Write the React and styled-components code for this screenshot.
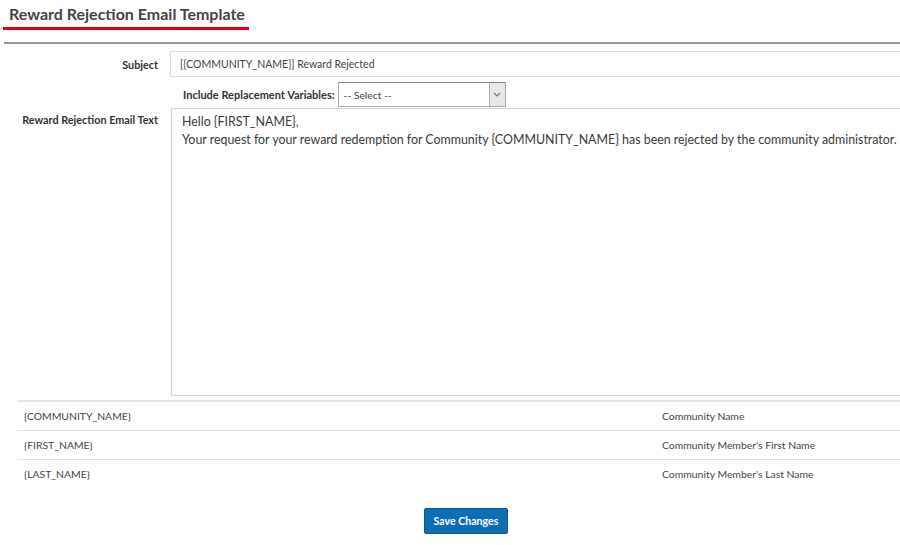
import React from 'react';
import styled, { createGlobalStyle } from 'styled-components';

const GlobalStyle = createGlobalStyle`
  html, body {
    margin: 0;
    padding: 0;
    background: #fff;
    font-family: 'Lato', 'Liberation Sans', sans-serif;
    color: #333;
    overflow: hidden;
  }
`

const Page = styled.div`
  width: 900px;
  height: 545px;
  overflow: hidden;
`

const Header = styled.div`
  padding: 4px 0 0 3px;
`

const Title = styled.h1`
  display: inline-block;
  margin: 0;
  padding: 0 4px 3px 6px;
  font-size: 16px;
  font-weight: 700;
  color: #444;
  border-bottom: 3px solid #e8000b;
  line-height: 20px;
`

const Divider = styled.div`
  margin: 12px 0 0 4px;
  height: 2px;
  background: #999;
`

const Form = styled.div`
  padding: 7px 0 0 0;
`

const Row = styled.div`
  display: grid;
  grid-template-columns: 158px 1fr;
  column-gap: 12px;
  align-items: ${p => p.$top ? 'start' : 'center'};
`

const Label = styled.label`
  text-align: right;
  font-size: 10.8px;
  font-weight: 700;
  color: #333;
  padding-top: ${p => p.$pt || 0}px;
`

const TextInput = styled.div`
  height: 24px;
  border: 1px solid #dcdcdc;
  border-right: none;
  display: flex;
  align-items: center;
  padding-left: 9px;
  font-size: 10.5px;
  color: #444;
`

const VarsRow = styled.div`
  display: flex;
  align-items: center;
  padding-left: 183px;
  margin: 5px 0 1px;
`

const VarsLabel = styled.span`
  font-size: 11px;
  font-weight: 700;
  color: #333;
  margin-right: 3px;
`

const Select = styled.div`
  width: 166px;
  height: 23px;
  border: 1px solid #aaa;
  border-top-color: #888;
  display: flex;
  align-items: stretch;
  font-size: 10.3px;
  color: #444;
`

const SelectText = styled.span`
  flex: 1;
  display: flex;
  align-items: center;
  padding-left: 5px;
`

const SelectArrow = styled.span`
  width: 15px;
  border-left: 1px solid #aaa;
  background: #e8e8e8;
  display: flex;
  align-items: center;
  justify-content: center;
`

const TextArea = styled.div`
  height: 282px;
  border: 1px solid #d0d0d0;
  border-right: none;
  padding: 4px 0 0 10px;
  font-size: 12.4px;
  line-height: 18px;
  color: #3a3a3a;
  margin-left: 1px;
  white-space: nowrap;
`

const VarTable = styled.div`
  margin: 4px 0 0 17px;
  border-top: 2px solid #e6e6e6;
`

const VarRow = styled.div`
  display: grid;
  grid-template-columns: 638px 1fr;
  height: 28px;
  align-items: center;
  border-bottom: ${p => p.$last ? 'none' : '1px solid #e0e0e0'};
  font-size: 10.4px;
  color: #444;
  padding-left: 7px;
`

const Footer = styled.div`
  display: flex;
  justify-content: center;
  padding: 20px 0 0 32px;
`

const SaveButton = styled.button`
  height: 26px;
  padding: 0 9px;
  background: #0f6db6;
  border: 1px solid #0a5592;
  border-radius: 2px;
  color: #fff;
  font-family: inherit;
  font-size: 10.6px;
  font-weight: 700;
`

const Chevron = () => (
  <svg width="8" height="5" viewBox="0 0 8 5">
    <path d="M1 1l3 3 3-3" fill="none" stroke="#777" strokeWidth="1.2" />
  </svg>
);

const vars = [
  ['{COMMUNITY_NAME}', 'Community Name'],
  ['{FIRST_NAME}', "Community Member's First Name"],
  ['{LAST_NAME}', "Community Member's Last Name"],
];

const App = () => (
  <Page>
    <GlobalStyle />
    <Header>
      <Title>Reward Rejection Email Template</Title>
    </Header>
    <Divider />
    <Form>
      <Row>
        <Label>Subject</Label>
        <TextInput>[{'{'}COMMUNITY_NAME{'}'}] Reward Rejected</TextInput>
      </Row>
      <VarsRow>
        <VarsLabel>Include Replacement Variables:</VarsLabel>
        <Select>
          <SelectText>-- Select --</SelectText>
          <SelectArrow><Chevron /></SelectArrow>
        </Select>
      </VarsRow>
      <Row $top>
        <Label $pt={5}>Reward Rejection Email Text</Label>
        <TextArea>
          Hello {'{FIRST_NAME}'},<br />
          Your request for your reward redemption for Community {'{COMMUNITY_NAME}'} has been rejected by the community administrator.
        </TextArea>
      </Row>
    </Form>
    <VarTable>
      {vars.map(([k, v], i) => (
        <VarRow key={k} $last={i === vars.length - 1}>
          <span>{k}</span>
          <span>{v}</span>
        </VarRow>
      ))}
    </VarTable>
    <Footer>
      <SaveButton>Save Changes</SaveButton>
    </Footer>
  </Page>
);

export default App;
